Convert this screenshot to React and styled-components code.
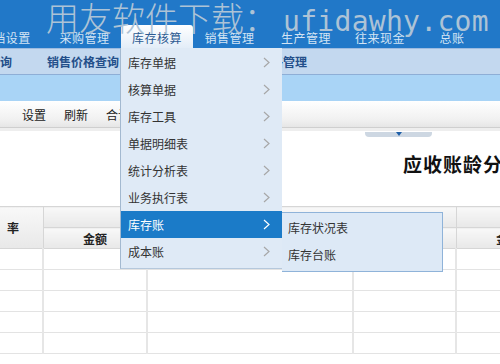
import React from "react";
import styled, { createGlobalStyle } from "styled-components";

const GlobalStyle = createGlobalStyle`
  html, body { margin: 0; padding: 0; background: #fff; }
  body { font-family: "Noto Sans CJK SC", "Noto Sans", sans-serif; }
  * { box-sizing: border-box; }
`;

const Screen = styled.div`
  position: relative;
  width: 500px;
  height: 364px;
  overflow: hidden;
  background: #fff;
  font-size: 12px;
`;

const TopBar = styled.div`
  height: 48px;
  background: #2178c8;
  display: flex;
  align-items: flex-end;
  margin-left: -24px;
`;

const NavItem = styled.div`
  width: ${(p) => p.$w}px;
  height: 23px;
  display: flex;
  align-items: center;
  justify-content: center;
  font-size: 12px;
  letter-spacing: 0.5px;
  color: ${(p) => (p.$active ? "#2d5b92" : "#d3e4f4")};
  background: ${(p) =>
    p.$active ? "linear-gradient(#ffffff, #e3edf8)" : "transparent"};
  border-radius: ${(p) => (p.$active ? "3px 3px 0 0" : "0")};
  padding-top: 2px;
`;

const Watermark = styled.div`
  position: absolute;
  left: 46px;
  top: -4px;
  display: flex;
  align-items: baseline;
  color: #adc3d6;
  pointer-events: none;
  white-space: nowrap;
`;

const WmCn = styled.span`
  font-family: "Noto Sans CJK SC", sans-serif;
  font-size: 33px;
  font-weight: 300;
  line-height: 42px;
`;

const WmEn = styled.span`
  font-family: "DejaVu Sans Mono", "Liberation Mono", monospace;
  font-size: 28px;
  letter-spacing: 0.3px;
  line-height: 42px;
  margin-left: 6px;
`;

const SubBar = styled.div`
  height: 27px;
  background: #c3d8ef;
  border-top: 1px solid #9dbbe0;
  border-bottom: 1px solid #8eaed6;
  display: flex;
  align-items: center;
  margin-left: -12px;
`;

const SubLink = styled.span`
  font-size: 12px;
  font-weight: 700;
  color: #234f8a;
  margin-left: ${(p) => p.$ml || 0}px;
  white-space: nowrap;
`;

const InfoBar = styled.div`
  height: 26px;
  background: #a9d4f6;
`;

const Toolbar = styled.div`
  height: 27px;
  background: linear-gradient(#ffffff, #f1f1f1 70%, #e6e6e6);
  border-bottom: 1px solid #cfcfcf;
  display: flex;
  align-items: center;
  padding-left: 22px;
  gap: 18px;
`;

const ToolButton = styled.span`
  font-size: 12px;
  color: #222;
  white-space: nowrap;
`;

const Content = styled.div`
  border-top: 3px solid #eeeeee;
  display: flex;
  flex-direction: column;
`;

const HandleRow = styled.div`
  height: 5px;
  display: flex;
  padding-left: 365px;
  margin-top: 1px;
`;

const Handle = styled.div`
  width: 67px;
  height: 5px;
  background: #cdd7e2;
  border-radius: 0 0 4px 4px;
  display: flex;
  justify-content: center;
`;

const Tri = styled.div`
  width: 0;
  height: 0;
  border-left: 3px solid transparent;
  border-right: 3px solid transparent;
  border-top: 4px solid #1f5fa8;
`;

const Title = styled.div`
  height: 66px;
  padding-left: 403px;
  padding-top: 13px;
  font-family: "Noto Sans CJK SC", serif;
  font-size: 19px;
  font-weight: 700;
  color: #111;
  letter-spacing: 1px;
  white-space: nowrap;
`;

const Table = styled.table`
  border-collapse: collapse;
  table-layout: fixed;
  width: 560px;
  margin-top: 3px;
`;

const Th = styled.th`
  height: ${(p) => p.$h || 21}px;
  background: linear-gradient(#f8f8f8, #e8e8e8);
  border: 1px solid #d6d6d6;
  border-left: ${(p) => (p.$noLeft ? "none" : "1px solid #d6d6d6")};
  font-size: 12px;
  font-weight: 700;
  color: #222;
  text-align: ${(p) => p.$align || "center"};
  padding: ${(p) => (p.$align === "left" ? "0 0 0 7px" : "0")};
  white-space: nowrap;
  overflow: hidden;
`;

const Td = styled.td`
  height: 21px;
  border: 1px solid #e3e3e3;
  border-left: ${(p) => (p.$noLeft ? "none" : "2px solid #e6e6e6")};
`;

const Dropdown = styled.div`
  position: absolute;
  left: 120px;
  top: 48px;
  width: 162px;
  padding: 1px 0 3px;
  background: #dfeaf6;
  border-left: 1px solid #a3b9d0;
  border-bottom: 1px solid #b5c8dc;
`;

const MenuItem = styled.div`
  height: 27px;
  display: flex;
  align-items: center;
  justify-content: space-between;
  padding: 0 12px 0 7px;
  font-size: 12px;
  color: ${(p) => (p.$active ? "#ffffff" : "#333")};
  background: ${(p) => (p.$active ? "#1b7bc8" : "transparent")};
  white-space: nowrap;
`;

const Submenu = styled.div`
  position: absolute;
  left: 282px;
  top: 212px;
  width: 161px;
  height: 60px;
  padding-top: 1px;
  background: #dde9f6;
  border: 1px solid #8fb3d9;
  border-left: none;
`;

const SubItem = styled.div`
  height: 27px;
  display: flex;
  align-items: center;
  padding-left: 6px;
  font-size: 12px;
  color: #333;
  white-space: nowrap;
`;

const Chevron = ({ color }) => (
  <svg width="7" height="11" viewBox="0 0 7 11">
    <polyline
      points="1,1 6,5.5 1,10"
      fill="none"
      stroke={color}
      strokeWidth="1.2"
    />
  </svg>
);

const navs = [
  { t: "档设置", w: 72 },
  { t: "采购管理", w: 73 },
  { t: "库存核算", w: 72, active: true },
  { t: "销售管理", w: 73 },
  { t: "生产管理", w: 80 },
  { t: "往来现金", w: 68 },
  { t: "总账", w: 76 },
];

const menu = [
  "库存单据",
  "核算单据",
  "库存工具",
  "单据明细表",
  "统计分析表",
  "业务执行表",
  "库存账",
  "成本账",
];

export default function App() {
  const rows = [0, 1, 2, 3, 4];
  return (
    <>
      <GlobalStyle />
      <Screen>
        <TopBar>
          {navs.map((n) => (
            <NavItem key={n.t} $w={n.w} $active={n.active}>
              {n.t}
            </NavItem>
          ))}
        </TopBar>
        <SubBar>
          <SubLink>查询</SubLink>
          <SubLink $ml={35}>销售价格查询</SubLink>
          <SubLink $ml={140}>价格管理</SubLink>
        </SubBar>
        <InfoBar />
        <Toolbar>
          <ToolButton>设置</ToolButton>
          <ToolButton>刷新</ToolButton>
          <ToolButton>合计</ToolButton>
        </Toolbar>
        <Content>
          <HandleRow>
            <Handle>
              <Tri />
            </Handle>
          </HandleRow>
          <Title>应收账龄分析表</Title>
          <Table>
            <colgroup>
              <col style={{ width: 43 }} />
              <col style={{ width: 104 }} />
              <col style={{ width: 206 }} />
              <col style={{ width: 103 }} />
              <col style={{ width: 104 }} />
            </colgroup>
            <thead>
              <tr>
                <Th rowSpan={2} $align="left" $noLeft>
                  率
                </Th>
                <Th colSpan={3}>账龄区间</Th>
                <Th />
              </tr>
              <tr>
                <Th>金额</Th>
                <Th>比率</Th>
                <Th>金额</Th>
                <Th>金额</Th>
              </tr>
            </thead>
            <tbody>
              {rows.map((r) => (
                <tr key={r}>
                  <Td $noLeft />
                  <Td />
                  <Td />
                  <Td />
                  <Td />
                </tr>
              ))}
            </tbody>
          </Table>
        </Content>
        <Watermark>
          <WmCn>用友软件下载：</WmCn>
          <WmEn>ufidawhy.com</WmEn>
        </Watermark>
        <Dropdown>
          {menu.map((m) => {
            const active = m === "库存账";
            return (
              <MenuItem key={m} $active={active}>
                <span>{m}</span>
                <Chevron color={active ? "#ffffff" : "#a7a7a7"} />
              </MenuItem>
            );
          })}
        </Dropdown>
        <Submenu>
          <SubItem>库存状况表</SubItem>
          <SubItem>库存台账</SubItem>
        </Submenu>
      </Screen>
    </>
  );
}
